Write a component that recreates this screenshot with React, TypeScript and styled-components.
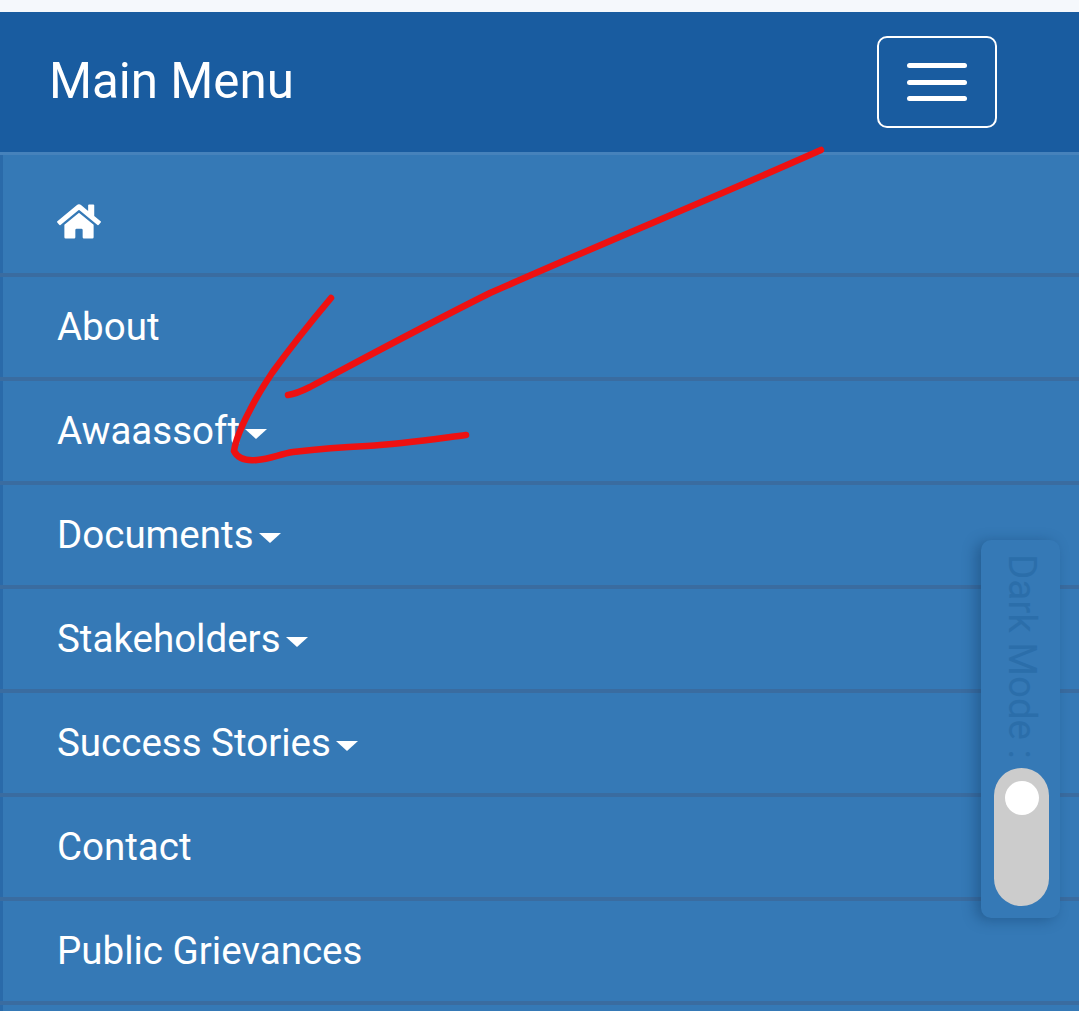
import React from "react";
import styled, { createGlobalStyle } from "styled-components";
import { FaHome } from "react-icons/fa";

const GlobalStyle = createGlobalStyle`
  html, body {
    margin: 0;
    padding: 0;
    background: #f5f8fc;
    overflow: hidden;
  }
  body {
    font-family: Roboto, "Liberation Sans", sans-serif;
  }
`;

const Page = styled.div`
  position: relative;
  display: flex;
  flex-direction: column;
  width: 1079px;
  height: 1011px;
  padding-top: 12px;
  box-sizing: border-box;
  overflow: hidden;
`;

const Header = styled.header`
  display: flex;
  flex: none;
  align-items: center;
  justify-content: space-between;
  box-sizing: border-box;
  height: 140px;
  padding: 0 82px 0 49px;
  background: #195ca0;
`;

const Title = styled.h1`
  margin: 0 0 2px;
  font-size: 49.3px;
  font-weight: 400;
  line-height: 56px;
  color: #fff;
`;

const MenuButton = styled.button`
  display: flex;
  flex-direction: column;
  align-items: center;
  justify-content: center;
  gap: 11.5px;
  box-sizing: border-box;
  width: 120px;
  height: 92px;
  padding: 0;
  background: transparent;
  border: 2px solid #fff;
  border-radius: 10px;
`;

const MenuBar = styled.span`
  display: block;
  width: 60px;
  height: 5px;
  border-radius: 3px;
  background: #fff;
`;

const Menu = styled.ul`
  flex: 1;
  margin: 0;
  padding: 0;
  list-style: none;
  background: #3579b6;
  border-top: 3px solid #4682bb;
  box-shadow: inset 3px 0 0 #2a6aa9;
`;

const Item = styled.li<{ $home?: boolean }>`
  display: flex;
  align-items: center;
  box-sizing: border-box;
  height: ${(p) => (p.$home ? "122px" : "104px")};
  padding: 0 0 2px 57px;
  border-bottom: 4px solid #3a6ca0;
  font-size: 38.5px;
  color: #fff;
`;

const HomeIcon = styled(FaHome)`
  width: 44px;
  height: 39px;
  margin-top: 17px;
`;

const Caret = styled.span`
  width: 0;
  height: 0;
  margin: 7px 0 0 5px;
  border-left: 11px solid transparent;
  border-right: 11px solid transparent;
  border-top: 10px solid #fff;
`;

const DarkPanel = styled.aside`
  position: absolute;
  left: 981px;
  top: 540px;
  display: flex;
  flex-direction: column;
  align-items: center;
  box-sizing: border-box;
  width: 79px;
  height: 378px;
  padding: 14px 0 0 2px;
  background: #3579b6;
  border-radius: 10px;
  box-shadow: -5px 2px 14px rgba(10, 50, 90, 0.38);
`;

const DarkLabel = styled.span`
  height: 214px;
  writing-mode: vertical-rl;
  font-size: 38.5px;
  line-height: 38px;
  color: #2b6eaa;
`;

const Toggle = styled.div`
  position: relative;
  width: 55px;
  height: 138px;
  border-radius: 28px;
  background: #ccc;
`;

const Knob = styled.span`
  position: absolute;
  left: 11px;
  top: 13px;
  width: 34px;
  height: 34px;
  border-radius: 50%;
  background: #fff;
`;

const Scribble = styled.svg`
  position: absolute;
  left: 0;
  top: 0;
  pointer-events: none;
`;

const items = [
  { label: "About" },
  { label: "Awaassoft", caret: true },
  { label: "Documents", caret: true },
  { label: "Stakeholders", caret: true },
  { label: "Success Stories", caret: true },
  { label: "Contact" },
  { label: "Public Grievances" },
];

export default function App() {
  return (
    <Page>
      <GlobalStyle />
      <Header>
        <Title>Main Menu</Title>
        <MenuButton aria-label="Toggle menu">
          <MenuBar />
          <MenuBar />
          <MenuBar />
        </MenuButton>
      </Header>
      <Menu>
        <Item $home>
          <HomeIcon />
        </Item>
        {items.map((item) => (
          <Item key={item.label}>
            {item.label}
            {item.caret ? <Caret /> : null}
          </Item>
        ))}
      </Menu>
      <DarkPanel>
        <DarkLabel>Dark Mode :</DarkLabel>
        <Toggle>
          <Knob />
        </Toggle>
      </DarkPanel>
      {/* red marker strokes drawn over the screenshot */}
      <Scribble width="1079" height="1011" viewBox="0 0 1079 1011" fill="none">
        <path
          d="M821 150 C720 195 610 240 490 293 C420 328 370 355 310 387 C302 391 295 394 288 395"
          stroke="#ee1111"
          strokeWidth="6.5"
          strokeLinecap="round"
        />
        <path
          d="M331 298 C310 323 290 348 272 373 C262 388 256 398 250 410 C242 425 236 438 234 451 C238 459 247 461 257 460 C270 459 280 454 293 452 C318 449 342 447 367 446 C402 444 435 439 466 435"
          stroke="#ee1111"
          strokeWidth="6.5"
          strokeLinecap="round"
        />
      </Scribble>
    </Page>
  );
}
